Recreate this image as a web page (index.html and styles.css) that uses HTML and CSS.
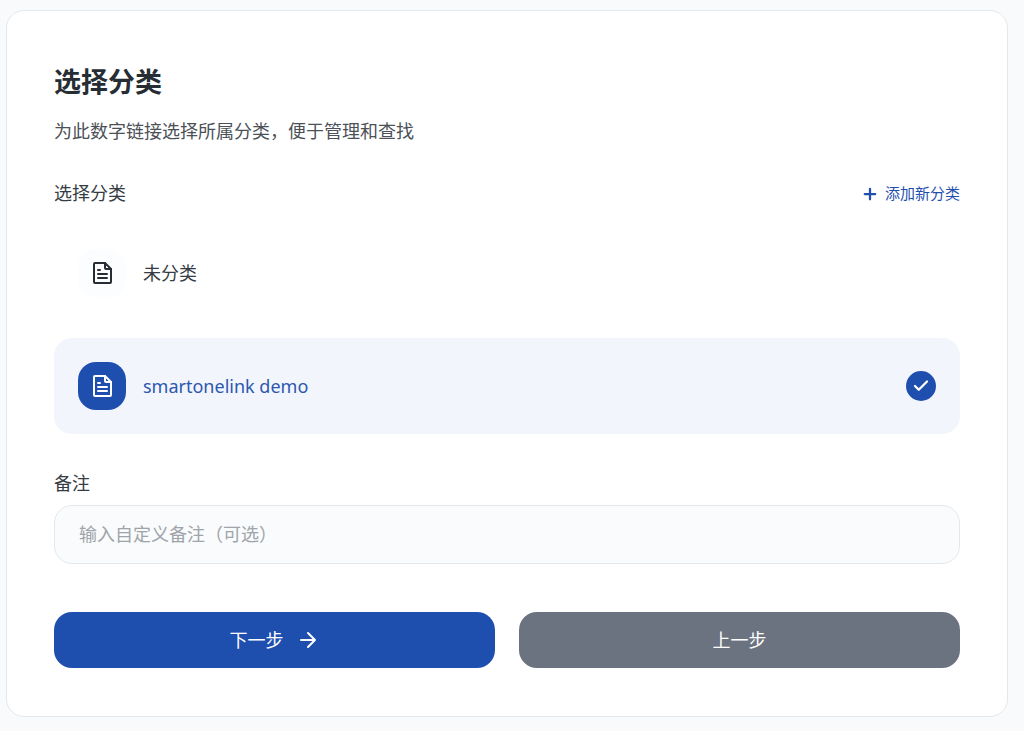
FILE: index.html
```html
<!DOCTYPE html>
<html lang="zh-CN">
  <head>
    <meta charset="UTF-8" />
    <meta name="viewport" content="width=device-width, initial-scale=1.0" />
    <title>选择分类</title>
    <link rel="stylesheet" href="styles.css" />
  </head>
  <body>
    <form class="card">
      <h1>选择分类</h1>
      <p class="subtitle">为此数字链接选择所属分类，便于管理和查找</p>

      <div class="section-head">
        <span id="categoryLabel">选择分类</span>
        <button type="button" class="add-btn">
          <svg class="bold" width="18" height="18" viewBox="0 0 24 24">
            <path d="M12 5v14M5 12h14" />
          </svg>
          添加新分类
        </button>
      </div>

      <div class="categories" role="radiogroup" aria-labelledby="categoryLabel">
        <label class="category">
          <input type="radio" name="category" value="none" />
          <span class="category-icon">
            <svg width="24" height="24" viewBox="0 0 24 24">
              <path d="M15 2H5a1 1 0 0 0-1 1v18a1 1 0 0 0 1 1h15a1 1 0 0 0 1-1V8Z" />
              <path d="M15 2v5a1 1 0 0 0 1 1h5M10 9H8M17 13H8M17 17H8" />
            </svg>
          </span>
          <span class="category-name">未分类</span>
          <span class="check">
            <svg class="bold" width="18" height="18" viewBox="0 0 24 24">
              <path d="M20 6L9 17l-5-5" />
            </svg>
          </span>
        </label>

        <label class="category">
          <input type="radio" name="category" value="demo" checked />
          <span class="category-icon">
            <svg width="24" height="24" viewBox="0 0 24 24">
              <path d="M15 2H5a1 1 0 0 0-1 1v18a1 1 0 0 0 1 1h15a1 1 0 0 0 1-1V8Z" />
              <path d="M15 2v5a1 1 0 0 0 1 1h5M10 9H8M17 13H8M17 17H8" />
            </svg>
          </span>
          <span class="category-name">smartonelink demo</span>
          <span class="check">
            <svg class="bold" width="18" height="18" viewBox="0 0 24 24">
              <path d="M20 6L9 17l-5-5" />
            </svg>
          </span>
        </label>
      </div>

      <label class="field-label" for="remark">备注</label>
      <input class="field" type="text" id="remark" placeholder="输入自定义备注（可选）" />

      <div class="actions">
        <button type="submit" class="btn btn-next">
          下一步
          <svg width="24" height="24" viewBox="0 0 24 24">
            <path d="M5 12h14M12 5l7 7-7 7" />
          </svg>
        </button>
        <button type="button" class="btn btn-prev">上一步</button>
      </div>
    </form>
  </body>
</html>
```
FILE: styles.css
```css
* {
  box-sizing: border-box;
}

body {
  margin: 0;
  padding: 10px 16px 14px 6px;
  background: #f9fafc;
  color: #363c43;
  font-family: "Noto Sans", "Noto Sans CJK SC", sans-serif;
  font-size: 18px;
  line-height: 27px;
}

button,
input {
  font: inherit;
}

svg {
  display: block;
  fill: none;
  stroke: currentColor;
  stroke-width: 2;
  stroke-linecap: round;
  stroke-linejoin: round;
}

.bold {
  stroke-width: 3;
}

.card {
  padding: 47px 47px 48px;
  background: #fff;
  border: 1px solid #e4e8eb;
  border-radius: 18px;
}

h1 {
  margin: 0 0 12px;
  font-size: 27px;
  line-height: 48px;
  font-weight: 700;
  color: #262d34;
}

.subtitle {
  margin: 0 0 35px;
  color: #4b5157;
}

.section-head {
  display: flex;
  justify-content: space-between;
  align-items: center;
  margin-bottom: 18px;
}

.add-btn {
  display: flex;
  align-items: center;
  gap: 6px;
  padding: 0;
  border: 0;
  background: none;
  color: #1f4fae;
  font-size: 15px;
  cursor: pointer;
}

/* Category list */
.categories {
  display: grid;
  gap: 17px;
  margin-bottom: 36px;
}

.category {
  display: flex;
  align-items: center;
  gap: 17px;
  padding: 24px;
  border-radius: 18px;
  cursor: pointer;
}

.category input {
  position: absolute;
  opacity: 0;
}

.category-icon {
  display: grid;
  place-items: center;
  width: 48px;
  height: 48px;
  border-radius: 18px;
  background: #fcfdfe;
  color: #262d34;
}

.category-name {
  flex: 1;
}

.check {
  display: none;
  place-items: center;
  width: 30px;
  height: 30px;
  border-radius: 50%;
  background: #1f4fae;
  color: #fff;
}

.category:has(input:checked) {
  background: #f3f5fd;
  color: #2b58ad;
}

.category:has(input:checked) .category-icon {
  background: #1f4fae;
  color: #fff;
}

.category:has(input:checked) .check {
  display: grid;
}

/* Remark field */
.field-label {
  display: block;
  margin-bottom: 8px;
}

.field {
  display: block;
  width: 100%;
  padding: 15px 24px;
  border: 1px solid #e4e8eb;
  border-radius: 18px;
  background: #f9fbfc;
  color: inherit;
}

.field::placeholder {
  color: #a0a4aa;
}

/* Bottom buttons */
.actions {
  display: grid;
  grid-template-columns: 1fr 1fr;
  gap: 24px;
  margin-top: 48px;
}

.btn {
  display: flex;
  justify-content: center;
  align-items: center;
  gap: 12px;
  height: 56px;
  padding: 0;
  border: 0;
  border-radius: 18px;
  color: #fff;
  cursor: pointer;
}

.btn-next {
  background: #1f4fae;
}

.btn-prev {
  background: #6b7280;
}
```
